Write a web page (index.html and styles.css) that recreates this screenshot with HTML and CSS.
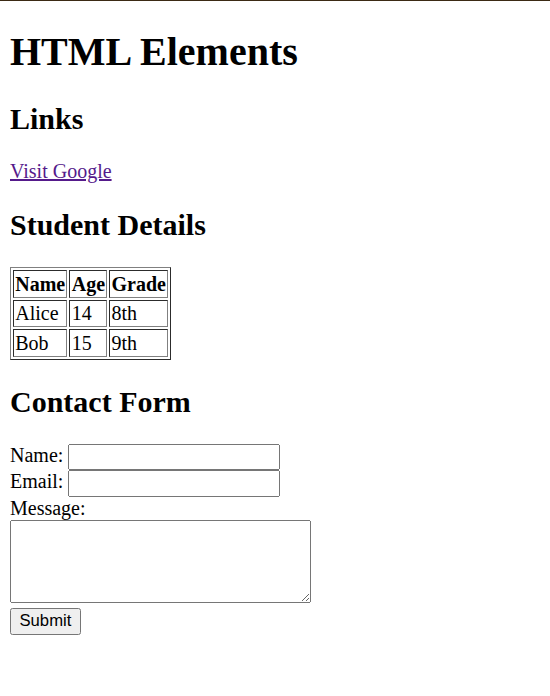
FILE: index.html
```html
<!DOCTYPE html>
<html>
<head>
<meta charset="utf-8">
<title>HTML Elements</title>
<link rel="stylesheet" href="styles.css">
</head>
<body>
<h1>HTML Elements</h1>
<h2>Links</h2>
<a href="#" class="visited">Visit Google</a>
<h2>Student Details</h2>
<table border="1">
<tr><th>Name</th><th>Age</th><th>Grade</th></tr>
<tr><td>Alice</td><td>14</td><td>8th</td></tr>
<tr><td>Bob</td><td>15</td><td>9th</td></tr>
</table>
<h2>Contact Form</h2>
<form>
<label for="name">Name:</label>
<input type="text" id="name" class="field"><br>
<label for="email">Email:</label>
<input type="email" id="email" class="field"><br>
<label for="msg">Message:</label><br>
<textarea id="msg" rows="5" cols="40" class="area"></textarea><br>
<button type="button" class="submit">Submit</button>
</form>
</body>
</html>
```
FILE: styles.css
```css
html {
  border-top: 1px solid #3b2a14;
}
body {
  zoom: 1.25;
  margin: 0 8px 8px 8px;
  font-family: "Liberation Serif", "Times New Roman", serif;
  font-size: 16px;
  color: #000;
  background: #fff;
}
.visited {
  color: #551a8b;
}
.field {
  box-sizing: border-box;
  width: 169.6px;
  height: 21.4px;
  font-family: "Liberation Sans", Arial, sans-serif;
  font-size: 13.33px;
}
.area {
  box-sizing: border-box;
  width: 241px;
  height: 66.4px;
  font-family: "Liberation Mono", monospace;
  font-size: 13.33px;
}
.submit {
  font-family: "Liberation Sans", Arial, sans-serif;
  font-size: 13.33px;
}
```
